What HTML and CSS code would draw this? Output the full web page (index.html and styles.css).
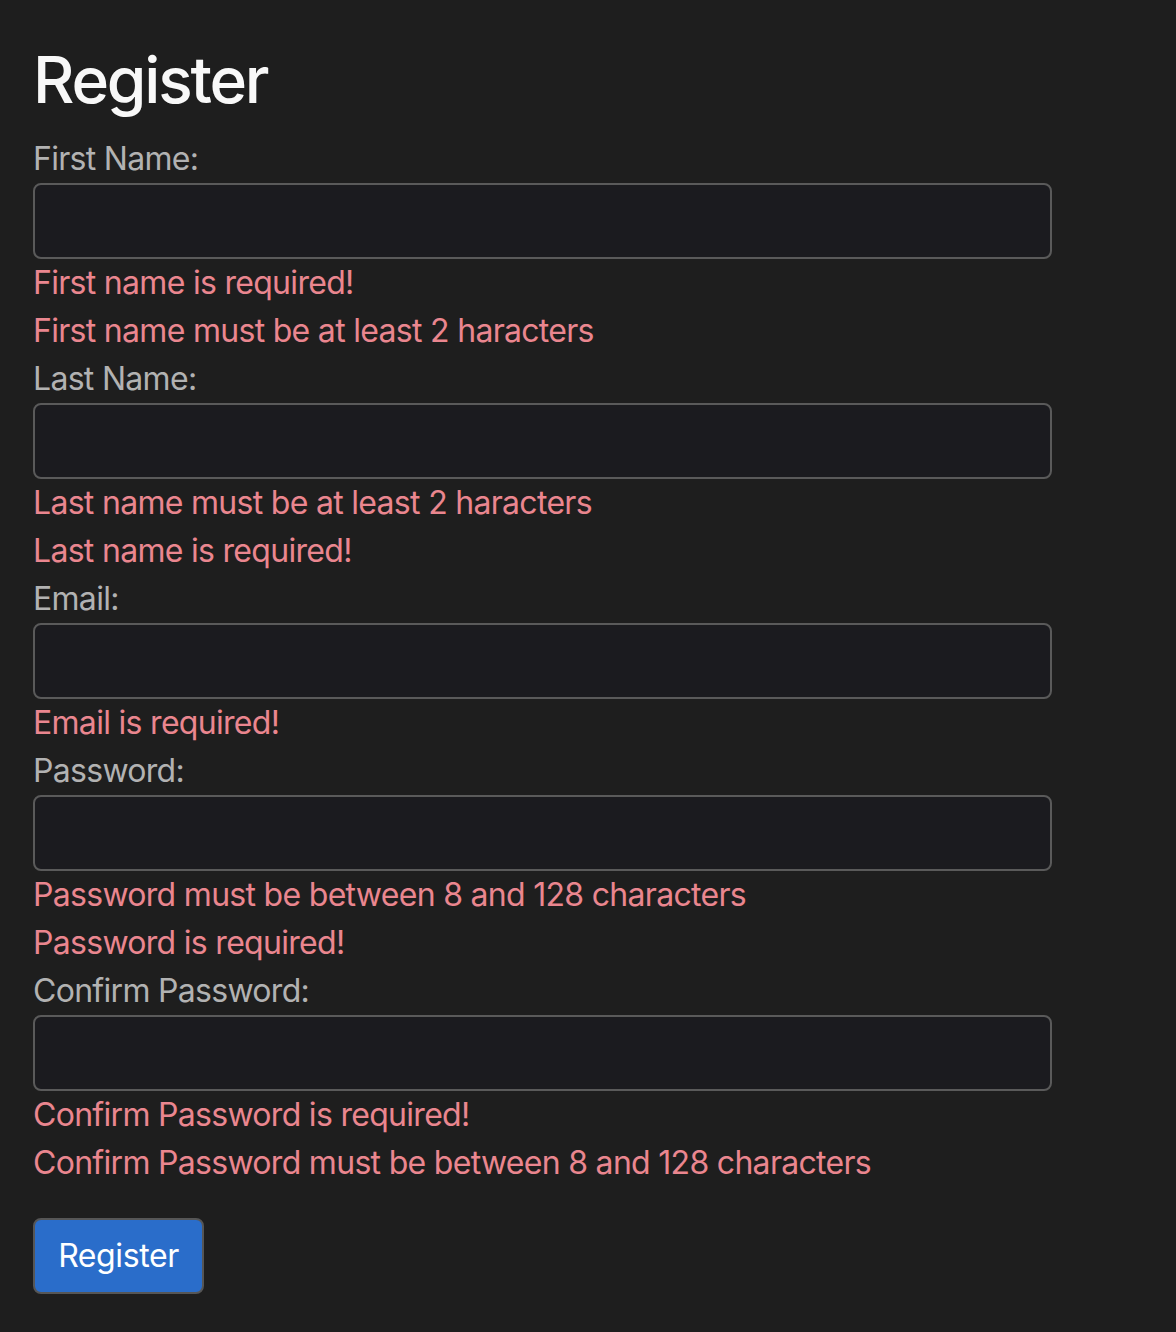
FILE: index.html
```html
<!DOCTYPE html>
<html lang="en">
<head>
<meta charset="utf-8">
<title>Register</title>
<link rel="stylesheet" href="styles.css">
</head>
<body>
<main class="page">
  <h1 class="title">Register</h1>
  <form class="form">
    <label class="label" for="fn">First Name:</label>
    <input class="input" id="fn" type="text">
    <div class="error">First name is required!</div>
    <div class="error">First name must be at least 2 haracters</div>

    <label class="label" for="ln">Last Name:</label>
    <input class="input" id="ln" type="text">
    <div class="error">Last name must be at least 2 haracters</div>
    <div class="error">Last name is required!</div>

    <label class="label" for="em">Email:</label>
    <input class="input" id="em" type="email">
    <div class="error">Email is required!</div>

    <label class="label" for="pw">Password:</label>
    <input class="input" id="pw" type="password">
    <div class="error">Password must be between 8 and 128 characters</div>
    <div class="error">Password is required!</div>

    <label class="label" for="cpw">Confirm Password:</label>
    <input class="input" id="cpw" type="password">
    <div class="error">Confirm Password is required!</div>
    <div class="error">Confirm Password must be between 8 and 128 characters</div>

    <button class="btn" type="button">Register</button>
  </form>
</main>
</body>
</html>
```
FILE: styles.css
```css
html, body {
  margin: 0;
  padding: 0;
  background: #1e1e1e;
}
body {
  font-family: Inter, "Liberation Sans", sans-serif;
  font-size: 32px;
  line-height: 1.5;
  letter-spacing: -0.7px;
  color: #dee2e6;
}
.page {
  padding: 42px 0 0 33px;
  width: 1019px;
}
.title {
  margin: 0 0 16px;
  font-size: 64px;
  font-weight: 500;
  line-height: 1.2;
  color: #f8f8f8;
  letter-spacing: -2.2px;
}
.form {
  display: flex;
  flex-direction: column;
  align-items: flex-start;
}
.label {
  display: block;
  height: 48px;
  color: #b2b2b2;
}
.input {
  box-sizing: border-box;
  width: 1019px;
  height: 76px;
  margin: 0;
  background: #1b1b1f;
  border: 2px solid #5a5a5a;
  border-radius: 8px;
  color: #dee2e6;
  font: inherit;
  padding: 12px 24px;
}
.error {
  height: 48px;
  color: #ea868f;
}
.btn {
  margin-top: 31px;
  box-sizing: border-box;
  height: 76px;
  width: 171px;
  background: #2a6dca;
  border: 2px solid #565656;
  border-radius: 8px;
  color: #ffffff;
  font: inherit;
  letter-spacing: -0.4px;
  padding: 0;
}
```
